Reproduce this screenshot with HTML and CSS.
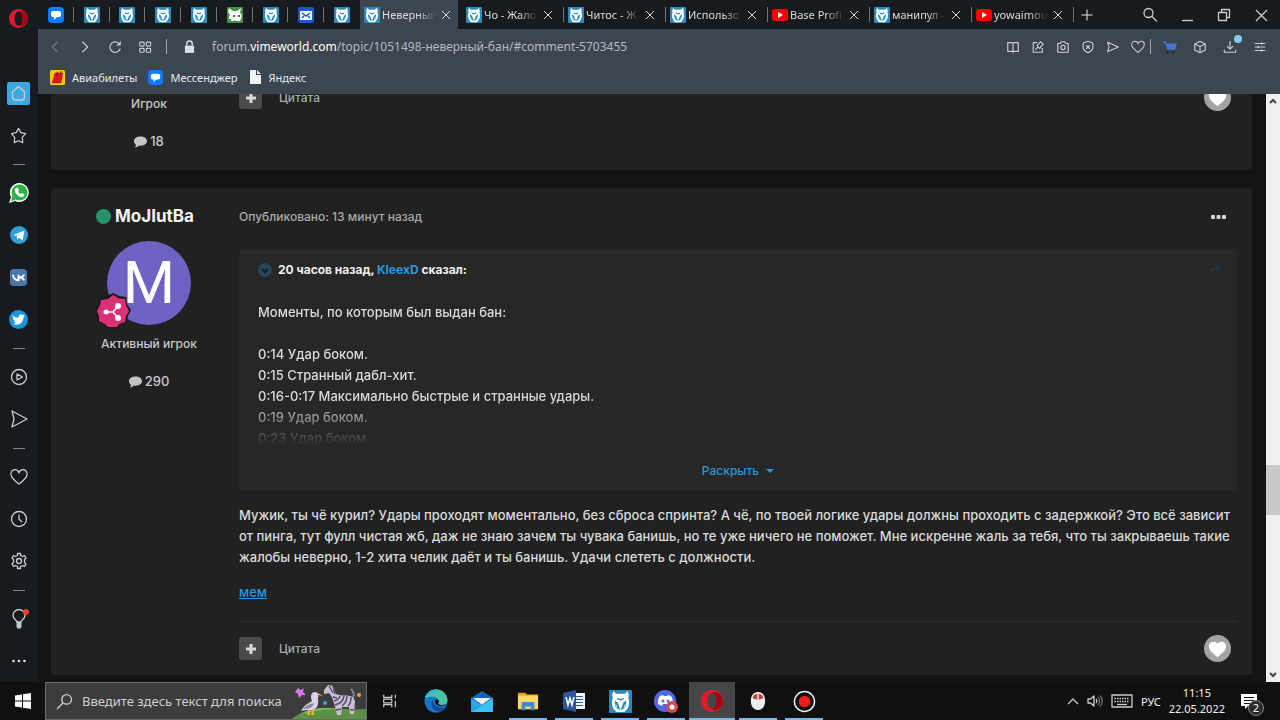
FILE: index.html
```html
<!DOCTYPE html>
<html lang="ru">
<head>
    <meta charset="UTF-8">
    <meta name="viewport" content="width=device-width, initial-scale=1.0">
    <title>Неверный бан</title>
    <link rel="stylesheet" href="styles.css">
</head>
<body>
    <!-- shared icons -->
    <svg class="sprite" aria-hidden="true">
        <symbol id="vime" viewBox="0 0 24 24">
            <rect width="24" height="24" rx="1" fill="#2b8abc"/>
            <path fill="#fff" d="M5 1c-2 3-2 5-1 7-2 5-1 11 4 15h8c5-4 6-10 4-15 1-2 1-4-1-7-1 2-2 3-4 3H9C7 4 6 3 5 1z"/>
            <path fill="#2b8abc" d="M8 8l3 1h2l3-1-1 2-3 1-3-1zM6 11l3 2 3 8-4-2c-2-2-2-5-2-8zM18 11l-3 2-3 8 4-2c2-2 2-5 2-8z"/>
            <path fill="#fff" d="M10 12l2 1 2-1-2 7zM7 14l2 5-1-1c-1-1-1-2-1-4zM17 14l-2 5 1-1c1-1 1-2 1-4z"/>
        </symbol>
        <symbol id="opera" viewBox="0 0 24 24">
            <path fill="#e21b2c" fill-rule="evenodd" d="M12 0a12 12 0 1 0 0 24 12 12 0 0 0 0-24zm0 3c3 0 5 4 5 9s-2 9-5 9-5-4-5-9 2-9 5-9z"/>
            <path fill="#a70014" d="M12 3c3-2 7 0 8 1 5 5 5 12 0 16-1 1-5 3-8 1 3 0 5-4 5-9s-2-9-5-9z"/>
        </symbol>
        <symbol id="youtube" viewBox="0 0 16 16">
            <rect y="2" width="16" height="12" rx="3" fill="#f00"/>
            <path fill="#fff" d="M6 5l5 3-5 3z"/>
        </symbol>
        <symbol id="messenger" viewBox="0 0 16 16">
            <rect width="16" height="16" rx="4" fill="#0a7cff"/>
            <path fill="#fff" d="M5 4h6a2 2 0 0 1 2 2v2a2 2 0 0 1-2 2h-2l-3 3v-3H5a2 2 0 0 1-2-2V6a2 2 0 0 1 2-2z"/>
        </symbol>
        <symbol id="close" viewBox="0 0 10 10">
            <path fill="none" stroke="currentColor" d="M1 1l8 8M9 1l-8 8"/>
        </symbol>
        <symbol id="heart" viewBox="0 0 18 18">
            <path d="M9 16C5 13 1 10 1 6.500a4 4 0 0 1 8-1.500 4 4 0 0 1 8 1.500C17 10 13 13 9 16z"/>
        </symbol>
        <symbol id="send" viewBox="0 0 18 18">
            <path d="M2 1l15 8-15 8 2-8z"/>
        </symbol>
        <symbol id="comment" viewBox="0 0 14 12">
            <path fill="#c4c4c4" d="M7 0c4 0 7 2 7 5s-3 5-7 5H5c-1 1-3 2-4 2 1-1 1-2 1-3C1 8 0 7 0 5c0-3 3-5 7-5z"/>
        </symbol>
        <symbol id="like" viewBox="0 0 28 28">
            <circle cx="14" cy="14" r="14" fill="#a3a3a3"/>
            <path fill="#fff" d="M14 23C9 19 5 16 5 11.500a5 5 0 0 1 9-2.500 5 5 0 0 1 9 2.500C23 16 19 19 14 23z"/>
        </symbol>
    </svg>

    <div class="screen">
        <nav class="sidebar">
            <button class="menu-button" aria-label="Меню"><svg width="19" height="19"><use href="#opera"/></svg></button>
            <a class="side-item" href="#" aria-label="Домой"><svg viewBox="0 0 23 23" width="23" height="23"><rect width="23" height="23" rx="2" fill="#3ba9e0"/><path class="line" d="M5.500 10l6-5.500 6 5.500v5a3 3 0 0 1-3 3h-6a3 3 0 0 1-3-3z"/></svg></a>
            <a class="side-item" href="#" aria-label="Закладки"><svg class="line" viewBox="0 0 18 18" width="17" height="17"><path d="M9 1.500l2.500 4.500 5 1-3.500 4 .5 5.500L9 14.500l-4.500 2L5 11 1.500 7l5-1z"/></svg></a>
            <span class="side-sep"></span>
            <a class="side-item" href="#" aria-label="WhatsApp"><svg viewBox="0 0 20 20" width="20" height="20"><path fill="#fff" d="M10.500 0a9.500 9.500 0 1 1-4.500 18L0 20l2-6A9.500 9.500 0 0 1 10.500 0z"/><circle cx="10.500" cy="9.500" r="8" fill="#2fb045"/><path fill="#2fb045" d="M2 18l1.500-5 3 4z"/><path fill="#fff" d="M7 5l1.500-.5L10 7l-1 1.500c.5 1 1.500 2 2.500 2.500l1.500-1 2.500 1.500c0 2-2 3-3.500 2.500C8.500 13 6 10 5.800 7.500c0-1 .4-2 1.200-2.500z"/></svg></a>
            <a class="side-item" href="#" aria-label="Telegram"><svg viewBox="0 0 20 20" width="18" height="18"><circle cx="10" cy="10" r="10" fill="#2f9fd4"/><path fill="#fff" d="M4 10l12-5-2 11-4-3-2 2-.5-3.500L13 7.500 6.500 11z"/></svg></a>
            <a class="side-item" href="#" aria-label="ВКонтакте"><svg viewBox="0 0 18 18" width="17" height="17"><rect width="18" height="18" rx="4" fill="#4a76a8"/><path fill="none" stroke="#fff" stroke-width="2" d="M3 6c1 4 3 6 6 6V6M15 6c-1 2-3 3-5 3 2 0 4 1 5 3"/></svg></a>
            <a class="side-item" href="#" aria-label="Twitter"><svg viewBox="0 0 20 20" width="19" height="19"><circle cx="10" cy="10" r="10" fill="#1b94e0"/><path fill="#fff" d="M4 5.500c2 2 3.500 2.500 6 2.500 0-2 1-3.500 3-3.500l1.500.8 2-.5-1 1.700 1 .5-1.500 1.500c0 4-3 7-7 7-1.500 0-3-.5-4-1 1.500 0 3-.5 3.500-1.300-1-.2-2-.8-2.300-1.700h1C5 11 4 10 4 8.800l1 .2C4 8 3.700 6.800 4 5.500z"/></svg></a>
            <span class="side-sep"></span>
            <a class="side-item" href="#" aria-label="Плеер"><svg class="line" viewBox="0 0 18 18" width="18" height="18"><circle cx="9" cy="9" r="7.500"/><path d="M7 6l5.500 3L7 12z"/></svg></a>
            <a class="side-item" href="#" aria-label="Моя лента"><svg class="line" width="18" height="18"><use href="#send"/></svg></a>
            <span class="side-sep"></span>
            <a class="side-item" href="#" aria-label="Избранное"><svg class="line" width="18" height="18"><use href="#heart"/></svg></a>
            <a class="side-item" href="#" aria-label="История"><svg class="line" viewBox="0 0 18 18" width="18" height="18"><circle cx="9" cy="9" r="7.500"/><path d="M9 4.500V9l3 3"/></svg></a>
            <a class="side-item" href="#" aria-label="Настройки"><svg class="line" viewBox="0 0 18 18" width="18" height="18"><circle cx="9" cy="9" r="2.500"/><path d="M7.500 1.500h3v2l2 1 2-1 1.500 2.500-1.500 1.500v3l1.500 1.500-1.500 2.500-2-1-2 1v2h-3v-2l-2-1-2 1L2 12l1.500-1.500v-3L2 6l1.500-2.500 2 1 2-1z"/></svg></a>
            <span class="side-sep"></span>
            <a class="side-item" href="#" aria-label="Советы"><svg viewBox="0 0 20 20" width="20" height="20"><path class="line" d="M8 13c0-2-4-3-4-6.500a6 6 0 0 1 12 0C16 10 12 11 12 13z"/><path fill="#c3c7cc" d="M7.500 13h5v5l-1 1.500h-3l-1-1.500z"/><circle cx="17" cy="3" r="3" fill="#f5402c"/></svg></a>
            <a class="side-item" href="#" aria-label="Ещё"><svg viewBox="0 0 16 4" width="16" height="4" fill="#dfe1e4"><circle cx="2.500" cy="2" r="1.300"/><circle cx="8" cy="2" r="1.300"/><circle cx="13.500" cy="2" r="1.300"/></svg></a>
        </nav>

        <div class="browser">
            <header class="tabstrip">
                <div class="pinned">
                    <a class="pin" href="#" aria-label="Мессенджер"><svg><use href="#messenger"/></svg></a>
                    <a class="pin" href="#" aria-label="VimeWorld"><svg><use href="#vime"/></svg></a>
                    <a class="pin" href="#" aria-label="VimeWorld"><svg><use href="#vime"/></svg></a>
                    <a class="pin" href="#" aria-label="VimeWorld"><svg><use href="#vime"/></svg></a>
                    <a class="pin" href="#" aria-label="VimeWorld"><svg><use href="#vime"/></svg></a>
                    <a class="pin" href="#" aria-label="Питомец"><svg viewBox="0 0 16 16"><rect width="16" height="16" rx="1" fill="#3f9143"/><path fill="#fff" d="M2 1l4 3h4l4-3-1 5c2 1 2 4 1 6l-1 2H9l-1-1-1 1H4v-2H2c0-2 0-3 1-4L1 5z"/><circle cx="7" cy="9" r="1" fill="#222"/><circle cx="12" cy="9" r="1" fill="#222"/></svg></a>
                    <a class="pin" href="#" aria-label="VimeWorld"><svg><use href="#vime"/></svg></a>
                    <a class="pin" href="#" aria-label="Почта"><svg viewBox="0 0 16 16"><rect width="16" height="16" rx="2" fill="#1557d6"/><rect x="2" y="4" width="12" height="9" rx="1" fill="#fff"/><path fill="none" stroke="#1557d6" stroke-width="1.500" d="M4 6l4 3 4-3M4 11l2-2M12 11l-2-2"/></svg></a>
                    <a class="pin" href="#" aria-label="VimeWorld"><svg><use href="#vime"/></svg></a>
                </div>
                <div class="tab active"><svg><use href="#vime"/></svg><span class="tab-title">Неверный</span><button aria-label="Закрыть"><svg><use href="#close"/></svg></button></div>
                <div class="tab"><svg><use href="#vime"/></svg><span class="tab-title">Чо - Жало</span><button aria-label="Закрыть"><svg><use href="#close"/></svg></button></div>
                <div class="tab"><svg><use href="#vime"/></svg><span class="tab-title">Читос - Ж</span><button aria-label="Закрыть"><svg><use href="#close"/></svg></button></div>
                <div class="tab"><svg><use href="#vime"/></svg><span class="tab-title">Использо</span><button aria-label="Закрыть"><svg><use href="#close"/></svg></button></div>
                <div class="tab"><svg><use href="#youtube"/></svg><span class="tab-title">Base Profil</span><button aria-label="Закрыть"><svg><use href="#close"/></svg></button></div>
                <div class="tab"><svg><use href="#vime"/></svg><span class="tab-title">манипул -</span><button aria-label="Закрыть"><svg><use href="#close"/></svg></button></div>
                <div class="tab"><svg><use href="#youtube"/></svg><span class="tab-title">yowaimou</span><button aria-label="Закрыть"><svg><use href="#close"/></svg></button></div>
                <button class="new-tab" aria-label="Новая вкладка"><svg viewBox="0 0 12 12" width="12" height="12"><path fill="none" stroke="#e8e8e8" d="M6 .5v11M.5 6h11"/></svg></button>
                <div class="window-buttons">
                    <button aria-label="Поиск"><svg class="line" viewBox="0 0 16 16"><circle cx="6.500" cy="6" r="4.500"/><path d="M10 9.500l5 5"/></svg></button>
                    <button aria-label="Свернуть"><svg class="line" viewBox="0 0 16 16"><path d="M3 13.500h11"/></svg></button>
                    <button aria-label="Развернуть"><svg class="line" viewBox="0 0 16 16"><path d="M2.500 5.500h8v8h-8zM5.500 5V2.500h8v8H11"/></svg></button>
                    <button aria-label="Закрыть окно"><svg class="line" viewBox="0 0 16 16"><path d="M3 3l11 11M14 3L3 14"/></svg></button>
                </div>
            </header>

            <div class="toolbar">
                <div class="nav-buttons">
                    <button class="dim" aria-label="Назад"><svg class="line" viewBox="0 0 16 16"><path d="M11 2L5 8l6 6"/></svg></button>
                    <button aria-label="Вперёд"><svg class="line" viewBox="0 0 16 16"><path d="M5 2l6 6-6 6"/></svg></button>
                    <button aria-label="Обновить"><svg class="line" viewBox="0 0 16 16"><path d="M14 9.500A6 6 0 1 1 12.500 4L14 5.500M14 1.500v4h-4"/></svg></button>
                    <button aria-label="Экспресс-панель"><svg class="line" viewBox="0 0 16 16"><rect x="2" y="2.500" width="5" height="4.500" rx="1"/><rect x="9.500" y="2.500" width="5" height="4.500" rx="1"/><rect x="2" y="9.500" width="5" height="4.500" rx="1"/><rect x="9.500" y="9.500" width="5" height="4.500" rx="1"/></svg></button>
                </div>
                <span class="bar-sep"></span>
                <svg class="lock" viewBox="0 0 12 14" width="11" height="13"><path fill="#dcdfe2" d="M1 6h10v8H1z"/><path fill="none" stroke="#dcdfe2" stroke-width="1.500" d="M3 6V4a3 3 0 0 1 6 0v2"/></svg>
                <div class="address">forum.<b>vimeworld.com</b>/topic/1051498-неверный-бан/#comment-5703455</div>
                <div class="page-actions">
                    <button aria-label="Режим чтения"><svg class="line" viewBox="0 0 16 16"><path d="M2 3h5l1 1 1-1h5v10H9l-1 1-1-1H2zM8 4v9"/></svg></button>
                    <button aria-label="Изменить"><svg class="line" viewBox="0 0 16 16"><path d="M7 3H2.500v11H13V9M5 11l3-3M7 6l3 4 1-2 3-3-3-3-3 3z"/></svg></button>
                    <button aria-label="Снимок"><svg class="line" viewBox="0 0 16 16"><path d="M2 4h3l1-2h4l1 2h3v10H2z"/><circle cx="8" cy="8.500" r="2.500"/></svg></button>
                    <button aria-label="Блокировка"><svg class="line" viewBox="0 0 16 16"><path d="M8 1.500l5.500 2V8c0 3-2 5-5.500 6.500C4.500 13 2.500 11 2.500 8V3.500zM6 6l4 4M10 6l-4 4"/></svg></button>
                    <button aria-label="Отправить"><svg class="line" viewBox="0 0 18 18"><path d="M2 3l14 6-14 6 2-6z"/></svg></button>
                    <button aria-label="В избранное"><svg class="line"><use href="#heart" width="14" height="14"/></svg></button>
                </div>
                <span class="bar-sep"></span>
                <div class="extensions">
                    <button aria-label="Покупки"><svg viewBox="0 0 16 16"><path fill="#4876c9" d="M0 1h3l1 3h12l-2 7H5L2 3H0z"/><circle cx="5" cy="14" r="1.500" fill="#1d2733"/><circle cx="12" cy="14" r="1.500" fill="#1d2733"/></svg></button>
                    <button aria-label="Расширения"><svg class="line" viewBox="0 0 16 16"><path d="M8 1.500l6 3v7l-6 3-6-3v-7zM2 4.500l6 3 6-3M8 7.500v7"/></svg></button>
                    <button class="downloads" aria-label="Загрузки"><svg class="line" viewBox="0 0 16 16"><path d="M8 1v9M4.500 7L8 10.500 11.500 7M1.500 11v3h13v-3"/></svg><span class="dot"></span></button>
                    <button aria-label="Простая настройка"><svg class="line" viewBox="0 0 16 16"><path d="M2 4h12M2 8h12M2 12h12M10 2.500v3M6 6.500v3M10 10.500v3"/></svg></button>
                </div>
            </div>

            <div class="bookmarks">
                <a href="#"><svg viewBox="0 0 16 16" width="15" height="15"><rect width="16" height="16" rx="2" fill="#ffc61a"/><path fill="#d8171e" d="M5 3h9l-2 11H2z"/><path fill="none" stroke="#5a1010" d="M7 6l1-4M11 5l1-4"/></svg>Авиабилеты</a>
                <a href="#"><svg width="15" height="15"><use href="#messenger"/></svg>Мессенджер</a>
                <a href="#"><svg viewBox="0 0 13 14" width="13" height="14"><path fill="#f1f2f3" d="M1 0h6v5h5v9H1z"/><path fill="#f1f2f3" d="M8 0l4 4H8z"/></svg>Яндекс</a>
            </div>

            <div class="viewport">
                <main class="forum">
                    <article class="post">
                        <aside class="author previous">
                            <div class="group">Игрок</div>
                            <div class="count"><svg><use href="#comment"/></svg>18</div>
                        </aside>
                        <div class="post-body">
                            <footer class="controls previous">
                                <button class="multi" aria-label="Мультицитата"><svg viewBox="0 0 10 10"><path fill="#d8d8d8" d="M3.500 0h3v3.500H10v3H6.500V10h-3V6.500H0v-3h3.500z"/></svg></button>
                                <a class="cite" href="#">Цитата</a>
                                <button class="like" aria-label="Нравится"><svg><use href="#like"/></svg></button>
                            </footer>
                        </div>
                    </article>

                    <article class="post">
                        <aside class="author">
                            <h3 class="name"><span class="online"></span>MoJIutBa</h3>
                            <div class="avatar">M
                                <svg class="rank" viewBox="0 0 36 36"><path fill="#1b1b1b" d="M18 0l6 3 7 1 1 7 4 6-3 6-1 7-7 2-2 4H12l-4-4-6-3v-6l-2-6 3-6 1-7 8-1z"/><path fill="#dc3076" d="M18 2l6 3.500 6 .5 1 6 3 6-3 5-1 6-6 2-2 3h-9l-3-3-6-3 0-5-2-5 3-6 1-5 7-1z"/><path fill="none" stroke="#fff" stroke-width="1.500" d="M11 19h7l5-6M18 19l5 6"/><circle cx="11" cy="19" r="2.500" fill="#fff"/><circle cx="23" cy="13" r="3" fill="#fff"/><circle cx="23" cy="25" r="3" fill="#fff"/></svg>
                            </div>
                            <div class="group">Активный игрок</div>
                            <div class="count"><svg><use href="#comment"/></svg>290</div>
                        </aside>
                        <div class="post-body">
                            <div class="meta">
                                <span>Опубликовано: 13 минут назад</span>
                                <button aria-label="Действия"><svg viewBox="0 0 16 4" width="16" height="4" fill="#d6d6d6"><rect width="4" height="4" rx="1"/><rect x="5.500" width="4" height="4" rx="1"/><rect x="11" width="4" height="4" rx="1"/></svg></button>
                            </div>
                            <blockquote class="quote">
                                <div class="quote-head">
                                    <svg viewBox="0 0 14 14" width="14" height="14"><circle cx="7" cy="7" r="7" fill="#25455a"/><path fill="none" stroke="#151f27" stroke-width="2" d="M4 6l3 3 3-3"/></svg>
                                    <span>20 часов назад, <a href="#">KleexD</a> сказал:</span>
                                    <svg class="goto" viewBox="0 0 14 12" width="13" height="12"><path fill="#24323d" d="M8 0l6 4-6 5V6C4 6 2 8 2 12-1 7 2 3 8 3z"/></svg>
                                </div>
                                <div class="quote-text">
                                    <p>Моменты, по которым был выдан бан:</p>
                                    <p>0:14 Удар боком.<br>0:15 Странный дабл-хит.<br>0:16-0:17 Максимально быстрые и странные удары.<br>0:19 Удар боком.<br>0:23 Удар боком.</p>
                                </div>
                                <button class="expand">Раскрыть <span class="caret"></span></button>
                            </blockquote>
                            <p class="message">Мужик, ты чё курил? Удары проходят моментально, без сброса спринта? А чё, по твоей логике удары должны проходить с задержкой? Это всё зависит от пинга, тут фулл чистая жб, даж не знаю зачем ты чувака банишь, но те уже ничего не поможет. Мне искренне жаль за тебя, что ты закрываешь такие жалобы неверно, 1-2 хита челик даёт и ты банишь. Удачи слететь с должности.</p>
                            <p class="message"><a href="#">мем</a></p>
                            <footer class="controls">
                                <button class="multi" aria-label="Мультицитата"><svg viewBox="0 0 10 10"><path fill="#d8d8d8" d="M3.500 0h3v3.500H10v3H6.500V10h-3V6.500H0v-3h3.500z"/></svg></button>
                                <a class="cite" href="#">Цитата</a>
                                <button class="like" aria-label="Нравится"><svg><use href="#like"/></svg></button>
                            </footer>
                        </div>
                    </article>
                </main>
                <div class="scrollbar">
                    <svg viewBox="0 0 8 6" width="8" height="6"><path d="M1 5l3-3 3 3"/></svg>
                    <div class="track"><span class="before"></span><span class="thumb"></span><span class="after"></span></div>
                    <svg viewBox="0 0 8 6" width="8" height="6"><path d="M1 1l3 3 3-3"/></svg>
                </div>
            </div>
        </div>
    </div>

    <div class="taskbar">
        <button class="start" aria-label="Пуск"><svg viewBox="0 0 16 16" width="16" height="16"><path fill="#fff" d="M0 2.500l7-1v6H0zM8 1.300L16 0v7.500H8zM0 8.500h7v6l-7-1zM8 8.500h8V16l-8-1.300z"/></svg></button>
        <label class="search">
            <svg class="line" viewBox="0 0 16 16" width="17" height="17"><circle cx="10" cy="6" r="4.500"/><path d="M6.500 9.500L1 15"/></svg>
            <input type="text" placeholder="Введите здесь текст для поиска" aria-label="Поиск">
            <svg viewBox="0 0 74 36" width="74" height="36">
                <path fill="#5b9146" d="M0 36c12-10 28-12 42-11s24 2 32 1v10z"/>
                <path fill="#83b85a" d="M6 32c14-8 30-8 42-6-10 0-26 1-42 6z"/>
                <path fill="#d879e6" d="M6 5l3 2 3-2-1 4 3 3-4 0-3 3-1-4-3-2z"/>
                <path fill="#d9d2e6" d="M9 28c4-7 8-8 11-10-2-5-1-9 3-9 3 0 4 3 3 6 1 9-2 12-8 12-3 0-6 0-9 1z"/>
                <path fill="#9287a9" d="M11 26c3-4 7-5 11-6-1 5-5 6-11 6z"/>
                <path fill="#e9b33a" d="M26 10l5 3-5-1zM16 27h2v5h-3zM20 27h2v5h-3z"/>
                <circle cx="33" cy="20" r="2" fill="#3ba7d8"/><circle cx="67" cy="12" r="2" fill="#f0a020"/>
                <path fill="#c9bed4" d="M32 7l4-5 5 1 3 8c6 3 12 0 17 3l2 4-1 13h-4l-1-7h-7l-1 8h-4l-2-8-3-10-3-4-5 1z"/>
                <path fill="none" stroke="#554c68" stroke-width="1.500" d="M37 3l4 7M41 3l2 8M41 14l4 1M42 18c4-1 5-2 6-5M43 22c6-2 8-4 9-9M50 23c4-3 5-6 5-10M56 23c2-2 3-5 3-9M44 27l5-1M58 27h4"/>
                <path fill="none" stroke="#8b809b" stroke-width="2" d="M61 14c2-2 0-6-2-8"/>
            </svg>
        </label>
        <div class="apps">
            <button class="app" aria-label="Представление задач"><svg class="line" viewBox="0 0 20 20" width="18" height="18"><path d="M3 6V3M3 3v3h9V3M3 17v-3h9v3M3 8h9v4H3zM16 3v4M16 10v7"/></svg></button>
            <button class="app" aria-label="Edge"><svg viewBox="0 0 24 24" width="24" height="24"><circle cx="12" cy="12" r="11.500" fill="#1676c8"/><path fill="#48c6a3" d="M1 9C4-3 22-3 23.500 11c0 5-5 6-9 4 2-6-4-9-13.500-6z"/><path fill="#2bb3e6" d="M1 9C3 2 10-1 16 2c-5 0-10 2-15 7z"/><path fill="#0c4f92" d="M9 10c-4 6 0 12 7 13 3-1 5-3 6-5-5 2-13 1-13-8z"/><path fill="#101010" d="M11 12c0-2 4-2 4 0l-1 3c3 2 6 1 8 0-4 4-11 2-11-3z"/></svg></button>
            <button class="app" aria-label="Почта"><svg viewBox="0 0 24 24" width="24" height="24"><path fill="#1266b3" d="M1 9l11-7 11 7v4H1z"/><path fill="#e9eef2" d="M3 9h18l-9 7z"/><path fill="#2aa6e8" d="M1 9l11 7-11 7z"/><path fill="#38c0f4" d="M23 9v14H1z"/></svg></button>
            <button class="app open" aria-label="Проводник"><svg viewBox="0 0 24 24" width="22" height="22"><path fill="#e0a020" d="M1 3h8l2 2h12v4H1z"/><path fill="#ffd766" d="M1 6h22v15H1z"/><path fill="#3f8fd0" d="M5 13h14v9h-4v-4H9v4H5z"/></svg></button>
            <button class="app open" aria-label="Word"><svg viewBox="0 0 24 24" width="24" height="24"><path fill="#f2f5fa" d="M12 4h11v16H12z"/><path stroke="#2b5797" d="M14 7.500h7M14 10.500h7M14 13.500h7M14 16.500h7"/><path fill="#2b579a" d="M1 4l13-3v22L1 20z"/><path fill="none" stroke="#fff" stroke-width="1.500" d="M4 8l2 8 2-7 2 7 2-8"/></svg></button>
            <button class="app open" aria-label="VimeWorld"><svg width="23" height="23"><use href="#vime"/></svg></button>
            <button class="app open" aria-label="Discord"><svg viewBox="0 0 24 24" width="24" height="24"><circle cx="11" cy="12" r="11" fill="#5566ea"/><path fill="#fff" d="M6 7l3-1 1 1h3l1-1 3 1c2 3 2 6 2 8l-4 2-1-2H9l-1 2-4-2c0-3 0-6 2-8z"/><circle cx="9" cy="12" r="1.500" fill="#5566ea"/><circle cx="14" cy="12" r="1.500" fill="#5566ea"/><circle cx="18" cy="18" r="6" fill="#d9484d"/><circle cx="18" cy="18" r="2.500" fill="#fff"/></svg></button>
            <button class="app open current" aria-label="Opera"><svg width="22" height="22"><use href="#opera"/></svg></button>
            <button class="app open" aria-label="Мышь"><svg viewBox="0 0 18 24" width="16" height="22"><path fill="#eee" d="M9 2c5 0 8 4 8 10s-3 10-8 10-8-4-8-10S4 2 9 2z"/><path fill="#b8453f" d="M3 9c0-7 12-7 12 0l-6 2z"/><path stroke="#eee" stroke-width="1.500" d="M9 2v9"/></svg></button>
            <button class="app open" aria-label="Запись"><svg viewBox="0 0 24 24" width="23" height="23"><circle cx="12" cy="12" r="10.500" fill="#111" stroke="#eee" stroke-width="1.500"/><circle cx="12" cy="12" r="6" fill="#f21d1d"/></svg></button>
        </div>
        <div class="tray">
            <button aria-label="Скрытые значки"><svg class="line" viewBox="0 0 12 8" width="12" height="8"><path d="M1 7l5-5 5 5"/></svg></button>
            <button aria-label="Звук"><svg class="line" viewBox="0 0 16 14" width="16" height="14"><path d="M1 5h2.500L7 2v10L3.500 9H1zM9 5c1 1 1 3 0 4"/><path opacity=".5" d="M11 3c2 2 2 6 0 8M13 1.500c3 3 3 8 0 11"/></svg></button>
            <button aria-label="Клавиатура"><svg class="line" viewBox="0 0 22 14" width="22" height="14"><rect x="1" y="1" width="20" height="12"/><path stroke-dasharray="1.500 1" d="M3.500 4.500h15M3.500 7.500h15"/><path d="M6 10.500h10"/></svg></button>
            <span class="lang">РУС</span>
            <div class="clock"><span>11:15</span><span>22.05.2022</span></div>
            <button class="notify" aria-label="Уведомления"><svg viewBox="0 0 16 16" width="16" height="16"><path fill="#fff" d="M0 1h16v12h-9l-3 3v-3H0z"/><path stroke="#111" d="M3 4.500h10M3 7.500h10M3 10.500h7"/></svg><span class="badge">2</span></button>
        </div>
    </div>
</body>
</html>
```
FILE: styles.css
```css
* { box-sizing: border-box; }
body { margin: 0; height: 100vh; display: flex; flex-direction: column; overflow: hidden; background-color: #131313; color: #dadada; font-family: Inter, "Noto Sans", sans-serif; font-size: 13px; line-height: 21px; }
button { display: flex; align-items: center; justify-content: center; padding: 0; border: 0; background: none; color: inherit; font: inherit; cursor: pointer; }
a { color: #2b97dc; }
p, h3, blockquote { margin: 0; }
svg { display: block; flex: none; }
.sprite { position: absolute; width: 0; height: 0; }
.line { fill: none; stroke: #c9cdd1; stroke-width: 1.3; stroke-linejoin: round; }

.screen { flex: 1; min-height: 0; display: flex; }
.sidebar { width: 38px; flex: none; display: flex; flex-direction: column; align-items: center; padding-right: 1px; background-color: #171b20; }
.menu-button { width: 37px; height: 72px; align-items: flex-start; padding-top: 9px; }
.side-item { height: 42px; flex: none; display: flex; align-items: center; }
.side-sep { height: 16px; flex: none; display: flex; align-items: center; }
.side-sep::before { content: ""; width: 12px; height: 1px; background-color: #7c8288; }
.browser { flex: 1; min-width: 0; display: flex; flex-direction: column; }

/* tabs */
.tabstrip { height: 29px; flex: none; display: flex; background-color: #171b20; font-family: "Noto Sans", sans-serif; font-size: 11px; }
.pinned { width: 322px; display: flex; }
.pin { flex: 1; display: flex; align-items: center; justify-content: center; position: relative; }
.pin svg, .tab > svg { width: 16px; height: 16px; }
.pin:not(:last-child)::after, .tab:not(.active)::after { content: ""; position: absolute; right: 0; top: 7px; width: 1px; height: 15px; background-color: #6e7378; }
.tab { width: 102px; display: flex; align-items: center; padding: 0 11px 0 4px; position: relative; }
.tab.active { background-color: #3b4650; width: 98px; margin-right: 4px; padding-right: 7px; }
.tab-title { flex: 1; min-width: 0; margin: 0 5px 0 2px; overflow: hidden; white-space: nowrap; -webkit-mask-image: linear-gradient(90deg, #000 65%, transparent); mask-image: linear-gradient(90deg, #000 65%, transparent); }
.tab button svg { width: 10px; height: 10px; }
.new-tab { width: 26px; }
.window-buttons { margin-left: auto; display: flex; padding-right: 1px; }
.window-buttons button { width: 37px; }
.window-buttons svg { width: 16px; height: 16px; }

/* address bar */
.toolbar { height: 35px; flex: none; display: flex; align-items: center; padding: 0 5px 0 2px; background-color: #3b4650; font-family: "Noto Sans", sans-serif; }
.toolbar button svg { width: 14px; height: 14px; }
.nav-buttons, .page-actions, .extensions { display: flex; }
.nav-buttons button, .extensions button { width: 30px; height: 30px; }
.page-actions button { width: 25px; height: 30px; }
.nav-buttons .dim { opacity: .4; }
.bar-sep { width: 1px; height: 15px; background-color: #a0a7ad; }
.nav-buttons + .bar-sep { margin: 0 17px 0 6px; }
.lock { margin-right: 17px; }
.address { flex: 1; font-size: 12px; color: #b3bac1; white-space: nowrap; }
.address b { font-weight: 400; color: #fff; }
.extensions { margin-left: 4px; }
.downloads { position: relative; }
.dot { position: absolute; top: 3px; right: 3px; width: 8px; height: 8px; border-radius: 50%; background-color: #7fcdfa; }
.bookmarks { height: 30px; flex: none; display: flex; gap: 11px; padding: 0 12px 4px; background-color: #3b4650; font-family: "Noto Sans", sans-serif; font-size: 11px; }
.bookmarks a { display: flex; align-items: center; gap: 7px; color: #e8eaec; text-decoration: none; }

/* forum page */
.viewport { flex: 1; min-height: 0; display: flex; }
.forum { flex: 1; display: flex; flex-direction: column; justify-content: flex-end; gap: 18px; padding: 0 14px 7px 13px; overflow: hidden; font-weight: 500; }
.post { flex: none; display: flex; padding: 18px 15px 13px 8px; background-color: #212121; border-radius: 4px; }
.author { width: 180px; flex: none; display: flex; flex-direction: column; align-items: center; color: #c8c8c8; }
.author.previous { justify-content: flex-end; padding-bottom: 5px; }
.name { display: flex; align-items: center; gap: 4px; padding-right: 8px; color: #f2f2f2; font-size: 17px; font-weight: 700; }
.online { width: 15px; height: 15px; border-radius: 50%; background-color: #27936b; }
.avatar { position: relative; width: 84px; height: 84px; margin: 14px 0 8px; border-radius: 50%; background-color: #6e62c4; color: #fff; font: 60px/84px Roboto, sans-serif; text-align: center; }
.rank { position: absolute; left: -12px; bottom: -4px; width: 36px; height: 36px; }
.group { font-size: 12px; }
.count { display: flex; align-items: center; gap: 3px; margin-top: 17px; }
.count svg { width: 13px; height: 12px; }
.post-body { flex: 1; min-width: 0; }
.meta { display: flex; justify-content: space-between; align-items: center; margin-bottom: 22px; padding-right: 10px; color: #aaa; font-size: 12px; }
.quote { padding: 10px 19px; margin-bottom: 14px; background-color: #272727; border-radius: 4px; }
.quote-head { display: flex; align-items: center; gap: 6px; margin-bottom: 22px; color: #f0f0f0; font-size: 12px; font-weight: 700; }
.quote-head a { text-decoration: none; }
.quote-head .goto { margin-left: auto; margin-right: -4px; }
.quote-text { height: 147px; overflow: hidden; -webkit-mask-image: linear-gradient(#000 65%, transparent 98%); mask-image: linear-gradient(#000 65%, transparent 98%); }
.quote-text p { margin-bottom: 21px; }
.expand { width: 100%; gap: 7px; padding-top: 11px; font-size: 12px; color: #2b97dc; }
.caret { border: 4px solid transparent; border-top-color: #2b97dc; border-bottom: 0; }
.message { margin-bottom: 14px; }
.controls { display: flex; align-items: center; margin-top: 18px; padding-top: 13px; border-top: 1px solid #303030; }
.controls.previous { margin: 0 0 46px; }
.multi { width: 23px; height: 23px; background-color: #4b4b4b; border-radius: 3px; }
.multi svg { width: 10px; height: 10px; }
.cite { margin-left: 17px; color: #aaa; font-size: 12px; text-decoration: none; }
.like { margin-left: auto; margin-right: 6px; }
.like svg { width: 27px; height: 27px; }
.scrollbar { width: 14px; flex: none; display: flex; flex-direction: column; align-items: center; padding: 4px 0; background-color: #f0f0f0; }
.scrollbar svg { fill: none; stroke: #444; stroke-width: 2; }
.track { flex: 1; width: 100%; display: flex; flex-direction: column; padding: 4px 0; }
.before { flex: 35; }
.thumb { height: 50px; background-color: #c9c9c9; }
.after { flex: 15; }

/* taskbar */
.taskbar { height: 38px; flex: none; display: flex; background-color: #101010; font-family: "Noto Sans", sans-serif; color: #f0f0f0; }
.start { width: 45px; }
.search { width: 322px; display: flex; align-items: center; padding-left: 10px; background-color: #3c3c3c; border: 1px solid #686868; }
.search input { flex: 1; min-width: 0; padding: 0 0 0 9px; border: 0; outline: 0; background: none; font: 13px "Noto Sans", sans-serif; color: #fff; }
.search input::placeholder { color: #cfcfcf; opacity: 1; }
.apps { display: flex; }
.app { width: 46px; position: relative; }
.app.open::after { content: ""; position: absolute; left: 4px; right: 4px; bottom: 0; height: 2px; background-color: #76b9ed; }
.app.current { background-color: #464646; }
.app.current::after { left: 0; right: 0; }
.tray { margin-left: auto; display: flex; align-items: center; gap: 8px; padding-right: 23px; font-size: 11px; }
.clock { display: flex; flex-direction: column; align-items: center; line-height: 16px; }
.notify { position: relative; width: 16px; height: 38px; margin-left: 8px; }
.badge { position: absolute; left: 7px; top: 18px; width: 16px; height: 16px; border: 1px solid #8a8a8a; border-radius: 50%; background-color: #2b2b2b; color: #fff; font-size: 11px; line-height: 14px; text-align: center; }
```
